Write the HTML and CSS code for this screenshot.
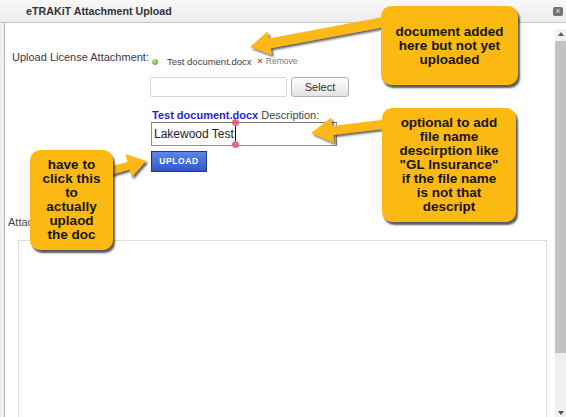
FILE: index.html
```html
<!DOCTYPE html>
<html>
<head>
<meta charset="utf-8">
<title>eTRAKiT Attachment Upload</title>
<link rel="stylesheet" href="styles.css">
</head>
<body>
<div class="window">
  <div class="titlebar">
    <span class="title">eTRAKiT Attachment Upload</span>
    <span class="close">×</span>
  </div>
  <div class="frame">
    <div class="content">
      <div class="upload-row">
        <div class="lbl">Upload License Attachment:</div>
        <div class="uploader">
          <div class="file-item">
            <span class="dot"></span>
            <span class="fname">Test document.docx</span>
            <span class="rx">×</span>
            <span class="remove">Remove</span>
          </div>
          <div class="picker">
            <div class="filebox"></div>
            <div class="select-btn">Select</div>
          </div>
          <div class="desc-label"><span class="desc-file">Test document.docx</span> Description:</div>
          <div class="desc-input">Lakewood Test<span class="caret"><span class="handle top"></span><span class="handle bot"></span></span></div>
          <div class="upload-btn">UPLOAD</div>
        </div>
      </div>
      <div class="attach-label">Attachments:</div>
      <div class="attach-box"></div>
    </div>
    <div class="scrollbar">
      <div class="sb-arrow up"></div>
      <div class="sb-thumb"></div>
      <div class="sb-track"></div>
      <div class="sb-arrow down"></div>
    </div>
  </div>

  <svg class="arrows" width="566" height="417" viewBox="0 0 566 417">
    <defs>
      <filter id="sh" x="-20%" y="-50%" width="140%" height="200%">
        <feDropShadow dx="2" dy="2" stdDeviation="1.2" flood-color="#2a2a2a" flood-opacity="0.75"/>
      </filter>
    </defs>
    <polygon class="arw" points="250,47 267.5,31.5 268.8,38.4 383.1,17.1 384.9,26.9 270.6,48.2 271.9,55.1"/>
    <polygon class="arw" points="311,133 331.3,117.5 332.3,125.9 385.5,119.5 386.5,128.5 333.3,134.9 334.4,143.3"/>
    <polygon class="arw" points="146,161 125.5,154.1 127.6,161.8 107,167.6 109,175.4 129.6,169.6 131.7,177.3"/>
  </svg>

  <div class="callout c1">document added<br>here but not yet<br>uploaded</div>
  <div class="callout c2">optional to add<br>file name<br>descirption like<br>"GL Insurance"<br>if the file name<br>is not that<br>descript</div>
  <div class="callout c3">have to<br>click this<br>to<br>actually<br>uplaod<br>the doc</div>
</div>
</body>
</html>
```

FILE: styles.css
```css
* {
  box-sizing: border-box;
}

html,
body {
  margin: 0;
  padding: 0;
}

body {
  width: 566px;
  height: 417px;
  overflow: hidden;
  font-family: "Liberation Sans", Arial, sans-serif;
  background: #efefef;
}

.window {
  position: relative;
  width: 566px;
  height: 417px;
  display: flex;
  flex-direction: column;
  background: #efefef;
  overflow: hidden;
}

/* title bar */
.titlebar {
  height: 23px;
  flex: none;
  display: flex;
  align-items: center;
  justify-content: space-between;
  padding: 0 3px 0 26px;
  border-bottom: 1px solid #c6c6c6;
  background: linear-gradient(#f8f8f8, #ededed);
}

.title {
  font-size: 10.7px;
  font-weight: bold;
  color: #333;
}

.close {
  width: 10px;
  height: 9px;
  margin-top: 1px;
  border-radius: 2px;
  background: #727272;
  color: #e4e4e4;
  font-size: 9px;
  line-height: 9px;
  text-align: center;
}

/* frame */
.frame {
  flex: 1;
  min-height: 0;
  display: flex;
  margin-left: 4px;
  border-left: 1px solid #b6b6b6;
  background: #fff;
}

.content {
  flex: 1;
  padding: 27px 0 0 3px;
}

.upload-row {
  display: flex;
  padding-left: 4px;
}

.lbl {
  width: 138px;
  font-size: 11px;
  line-height: 14px;
  color: #3c3548;
}

.uploader {
  padding-top: 4px;
}

.file-item {
  display: flex;
  align-items: center;
  height: 14px;
}

.dot {
  width: 6px;
  height: 6px;
  margin: 1px 9px 0 2px;
  border-radius: 50%;
  background: radial-gradient(circle at 35% 35%, #b9e27e, #5c9f2b);
}

.fname {
  font-size: 9.5px;
  color: #3d3d3d;
}

.rx {
  margin-left: 6px;
  font-size: 9px;
  font-weight: bold;
  color: #e4432a;
}

.remove {
  margin-left: 3px;
  font-size: 8.5px;
  color: #777;
}

.picker {
  display: flex;
  gap: 4px;
  height: 20px;
  margin-top: 9px;
}

.filebox {
  width: 137px;
  border: 1px solid #d6d6d6;
  border-radius: 2px;
  background: #fff;
}

.select-btn {
  width: 58px;
  border: 1px solid #b2b2b2;
  border-radius: 3px;
  background: linear-gradient(#fdfdfd, #e4e4e4);
  font-size: 11px;
  line-height: 18px;
  text-align: center;
  color: #333;
}

.desc-label {
  margin-top: 11px;
  padding-left: 2px;
  font-size: 11px;
  line-height: 14px;
  color: #444;
}

.desc-file {
  font-weight: bold;
  color: #1f1fe4;
}

.desc-input {
  position: relative;
  width: 186px;
  height: 24px;
  margin-left: 1px;
  padding-left: 2px;
  border: 1px solid #8e8e8e;
  border-top-color: #777;
  background: #fff;
  font-size: 12px;
  line-height: 22px;
  color: #222;
}

.caret {
  position: relative;
  display: inline-block;
  width: 1px;
  height: 15px;
  margin-left: 1px;
  vertical-align: -3px;
  background: #111;
}

.handle {
  position: absolute;
  left: -3px;
  width: 7px;
  height: 7px;
  border-radius: 50%;
  background: rgba(228, 82, 122, 0.85);
}

.handle.top {
  top: -7px;
}

.handle.bot {
  bottom: -7px;
}

.upload-btn {
  width: 56px;
  height: 21px;
  margin: 5px 0 0 1px;
  border: 1px solid #25367a;
  background: linear-gradient(#5f84ea, #3357c9);
  color: #fff;
  font-size: 8.5px;
  font-weight: bold;
  letter-spacing: 0.6px;
  line-height: 19px;
  text-align: center;
}

.attach-label {
  margin-top: 43px;
  font-size: 11px;
  line-height: 14px;
  color: #444;
}

.attach-box {
  height: 220px;
  margin: 11px 8px 0 10px;
  border: 1px solid #dcdcdc;
  background: #fff;
}

/* scrollbar */
.scrollbar {
  width: 11px;
  flex: none;
  margin-top: 6px;
  display: flex;
  flex-direction: column;
  background: #f0f0f0;
}

.sb-arrow {
  height: 12px;
  flex: none;
  display: flex;
  justify-content: center;
}

.sb-arrow.up {
  padding-top: 3px;
}

.sb-arrow.down {
  padding-top: 6px;
}

.sb-arrow.up::before {
  content: "";
  border-left: 3.5px solid transparent;
  border-right: 3.5px solid transparent;
  border-bottom: 4px solid #606060;
  height: 0;
}

.sb-arrow.down::before {
  content: "";
  border-left: 3.5px solid transparent;
  border-right: 3.5px solid transparent;
  border-top: 4px solid #505050;
  height: 0;
}

.sb-thumb {
  height: 312px;
  flex: none;
  background: #c2c2c2;
}

.sb-track {
  flex: 1;
}

/* annotations */
.arrows {
  position: absolute;
  left: 0;
  top: 0;
  pointer-events: none;
}

.arw {
  fill: #fbb812;
  filter: url(#sh);
}

.callout {
  position: absolute;
  display: flex;
  align-items: center;
  justify-content: center;
  border-radius: 10px;
  background: #fcb912;
  box-shadow: 2px 3px 2px rgba(35, 35, 35, 0.75);
  font-size: 13.5px;
  font-weight: bold;
  line-height: 14px;
  text-align: center;
  color: #151515;
}

.c1 {
  left: 381px;
  top: 6px;
  width: 137px;
  height: 79px;
}

.c2 {
  left: 382px;
  top: 108px;
  width: 134px;
  height: 114px;
}

.c3 {
  left: 30px;
  top: 150px;
  width: 83px;
  height: 100px;
}
```
